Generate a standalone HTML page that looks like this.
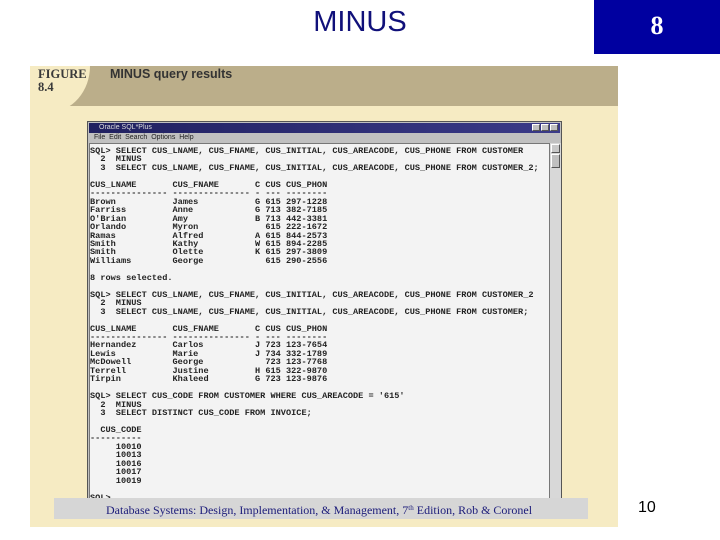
<!DOCTYPE html>
<html><head><meta charset="utf-8"><style>
*{margin:0;padding:0;box-sizing:border-box}
body{width:720px;height:540px;background:#fff;position:relative;overflow:hidden;font-family:"Liberation Sans",sans-serif}
.title{position:absolute;left:0;width:720px;top:6px;text-align:center;font-size:29px;color:#10107a}
.box{position:absolute;left:594px;top:0;width:126px;height:54px;background:#0000a0;color:#fff;font-family:"Liberation Serif",serif;font-weight:bold;font-size:26px;text-align:center;line-height:52px}
.fig{position:absolute;left:30px;top:66px;width:588px;height:461px;background:#f6ebc3}
.band{position:absolute;left:0;top:0;width:588px;height:40px;background:#bbae8a}
.corner{position:absolute;left:0;top:0;width:60px;height:46px;background:#f6ebc3;border-bottom-right-radius:40px 46px}
.fl{position:absolute;left:8px;top:2px;font-family:"Liberation Serif",serif;font-weight:bold;font-size:12.5px;color:#3a3a3a;line-height:13px}
.ft{position:absolute;left:80px;top:1px;font-family:"Liberation Sans",sans-serif;font-weight:bold;font-size:12.5px;color:#333}
.win{position:absolute;left:87px;top:121px;width:475px;height:380px;background:#c0c0c0;border:1px solid #555}
.tb{position:absolute;left:1px;top:1px;right:1px;height:10px;background:linear-gradient(90deg,#202060,#3a3a88);color:#ddd;font-size:7px;line-height:10px;padding-left:10px}
.btns{position:absolute;right:2px;top:1px;height:8px}
.btns span{display:inline-block;width:8px;height:7px;background:#c0c0c0;margin-left:1px;border:1px solid #fff;border-right-color:#555;border-bottom-color:#555}
.mb{position:absolute;left:1px;top:11px;right:1px;height:10px;font-size:7px;line-height:10px;padding-left:5px;color:#222}
.ct{position:absolute;left:1px;top:21px;width:461px;bottom:0;background:#f3f3f3;border:1px solid #777;overflow:hidden}
.sb{position:absolute;left:462px;top:21px;width:11px;bottom:0;background:#d8d8d8}
.sb i{position:absolute;left:1px;top:1px;width:9px;height:9px;background:#c8c8c8;border:1px solid #fff;border-right-color:#555;border-bottom-color:#555}
.sb b{position:absolute;left:1px;top:11px;width:9px;height:14px;background:#c0c0c0;border:1px solid #fff;border-right-color:#555;border-bottom-color:#555}
pre{position:absolute;left:0px;top:3px;font-family:"Liberation Mono",monospace;font-weight:bold;font-size:8.6px;line-height:8.45px;color:#222}
.foot{position:absolute;left:54px;top:498px;width:534px;height:21px;background:#d6d6d6;font-family:"Liberation Serif",serif;font-size:12px;color:#1c1c7a;line-height:21px;padding-left:52px;white-space:nowrap}
.foot sup{font-size:7px;vertical-align:4px}
.pn{position:absolute;left:638px;top:499px;font-size:16px;color:#000}
</style></head><body>
<div class="title">MINUS</div>
<div class="box">8</div>
<div class="fig"><div class="band"></div><div class="corner"></div>
<div class="fl">FIGURE<br>8.4</div><div class="ft">MINUS query results</div></div>
<div class="win">
<div class="tb">Oracle SQL*Plus<div class="btns"><span></span><span></span><span></span></div></div>
<div class="mb">File&nbsp; Edit&nbsp; Search&nbsp; Options&nbsp; Help</div>
<div class="ct"><pre>SQL> SELECT CUS_LNAME, CUS_FNAME, CUS_INITIAL, CUS_AREACODE, CUS_PHONE FROM CUSTOMER
  2  MINUS
  3  SELECT CUS_LNAME, CUS_FNAME, CUS_INITIAL, CUS_AREACODE, CUS_PHONE FROM CUSTOMER_2;

CUS_LNAME       CUS_FNAME       C CUS CUS_PHON
--------------- --------------- - --- --------
Brown           James           G 615 297-1228
Farriss         Anne            G 713 382-7185
O'Brian         Amy             B 713 442-3381
Orlando         Myron             615 222-1672
Ramas           Alfred          A 615 844-2573
Smith           Kathy           W 615 894-2285
Smith           Olette          K 615 297-3809
Williams        George            615 290-2556

8 rows selected.

SQL> SELECT CUS_LNAME, CUS_FNAME, CUS_INITIAL, CUS_AREACODE, CUS_PHONE FROM CUSTOMER_2
  2  MINUS
  3  SELECT CUS_LNAME, CUS_FNAME, CUS_INITIAL, CUS_AREACODE, CUS_PHONE FROM CUSTOMER;

CUS_LNAME       CUS_FNAME       C CUS CUS_PHON
--------------- --------------- - --- --------
Hernandez       Carlos          J 723 123-7654
Lewis           Marie           J 734 332-1789
McDowell        George            723 123-7768
Terrell         Justine         H 615 322-9870
Tirpin          Khaleed         G 723 123-9876

SQL> SELECT CUS_CODE FROM CUSTOMER WHERE CUS_AREACODE = '615'
  2  MINUS
  3  SELECT DISTINCT CUS_CODE FROM INVOICE;

  CUS_CODE
----------
     10010
     10013
     10016
     10017
     10019

SQL></pre></div>
<div class="sb"><i></i><b></b></div>
</div>
<div class="foot">Database Systems: Design, Implementation, &amp; Management, 7<sup>th</sup> Edition, Rob &amp; Coronel</div>
<div class="pn">10</div>
</body></html>
